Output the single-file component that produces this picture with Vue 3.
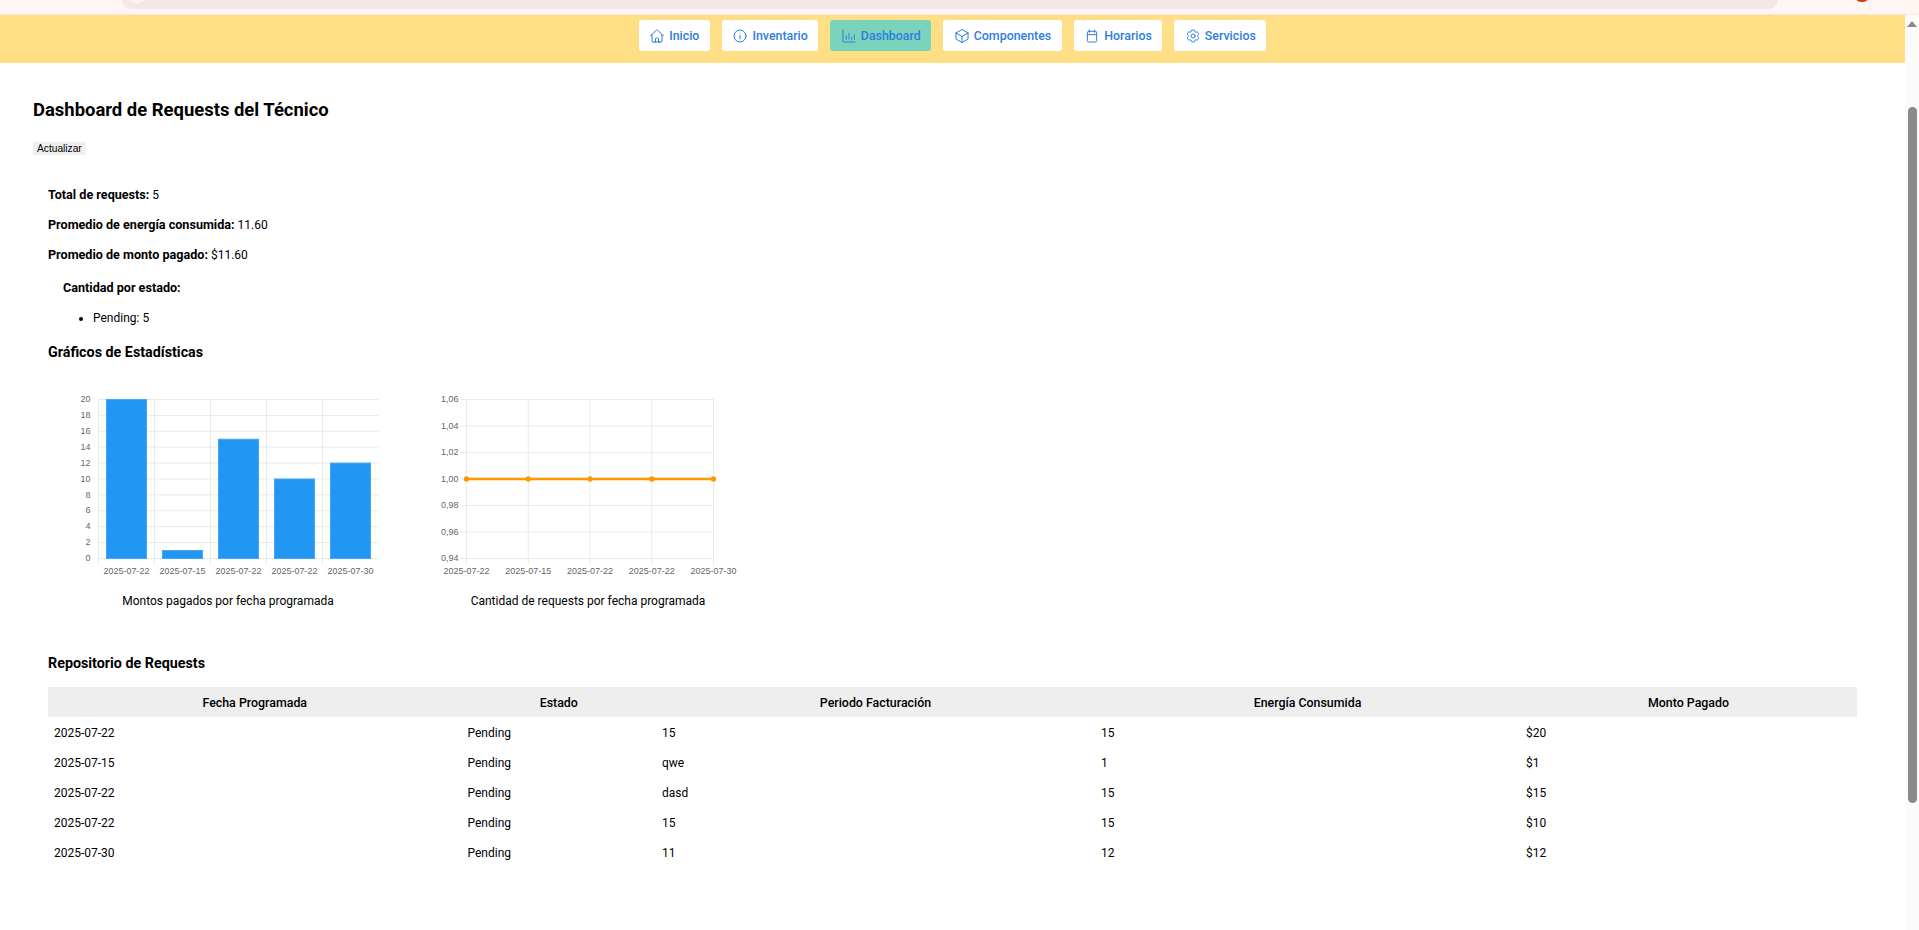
<template>
  <div class="window">
    <div class="browser-strip">
      <div class="address-pill"><span class="pill-circle"></span></div>
      <span class="browser-badge"></span>
    </div>

    <div class="viewport">
      <div class="page">
        <nav class="navbar">
          <a
            v-for="item in navItems"
            :key="item.label"
            href="#"
            class="nav-btn"
            :class="{ active: item.active }"
          >
            <svg class="nav-icon" viewBox="0 0 24 24" fill="none" stroke="currentColor" stroke-width="1.5" stroke-linecap="round" stroke-linejoin="round">
              <path :d="item.icon" />
            </svg>
            {{ item.label }}
          </a>
        </nav>

        <main class="dashboard">
          <h1>Dashboard de Requests del Técnico</h1>
          <button class="refresh-btn">Actualizar</button>

          <section class="stats">
            <p><strong>Total de requests:</strong> 5</p>
            <p><strong>Promedio de energía consumida:</strong> 11.60</p>
            <p><strong>Promedio de monto pagado:</strong> $11.60</p>
            <div class="states">
              <h4>Cantidad por estado:</h4>
              <ul>
                <li>Pending: 5</li>
              </ul>
            </div>

            <h3 class="charts-title">Gráficos de Estadísticas</h3>
            <div class="charts">
              <figure class="chart">
                <svg width="340" height="190" viewBox="0 0 340 190">
                  <g class="grid">
                    <line v-for="t in barTicks" :key="t" :x1="barLeft" :x2="barLeft + barBand * 5" :y1="barY(t)" :y2="barY(t)" />
                    <line v-for="i in 5" :key="i" :x1="barLeft + barBand * (i - 1)" :x2="barLeft + barBand * (i - 1)" :y1="plotTop" :y2="plotBottom + 6" />
                  </g>
                  <rect
                    v-for="(m, i) in montos"
                    :key="i"
                    class="bar"
                    :x="barLeft + barBand * i + 8"
                    :y="barY(m)"
                    width="40"
                    :height="plotBottom - barY(m)"
                  />
                  <text v-for="t in barTicks" :key="'y' + t" class="tick" :x="barLeft - 8" :y="barY(t) + 2.6" text-anchor="end">{{ t }}</text>
                  <text v-for="(f, i) in fechas" :key="'x' + i" class="tick" :x="barLeft + barBand * (i + 0.5)" y="184" text-anchor="middle">{{ f }}</text>
                </svg>
                <figcaption>Montos pagados por fecha programada</figcaption>
              </figure>

              <figure class="chart">
                <svg width="340" height="190" viewBox="0 0 340 190">
                  <g class="grid">
                    <line v-for="(t, i) in lineTicks" :key="t" :x1="lineLeft - 6" :x2="lineLeft + lineStep * 4" :y1="lineY(i)" :y2="lineY(i)" />
                    <line v-for="i in 5" :key="i" :x1="lineLeft + lineStep * (i - 1)" :x2="lineLeft + lineStep * (i - 1)" :y1="plotTop" :y2="plotBottom + 6" />
                  </g>
                  <line class="series" :x1="lineLeft" :x2="lineLeft + lineStep * 4" :y1="lineY(3)" :y2="lineY(3)" />
                  <circle v-for="i in 5" :key="i" class="dot" :cx="lineLeft + lineStep * (i - 1)" :cy="lineY(3)" r="2.7" />
                  <text v-for="(t, i) in lineTicks" :key="'y' + t" class="tick" :x="lineLeft - 8" :y="lineY(i) + 2.6" text-anchor="end">{{ t }}</text>
                  <text v-for="(f, i) in fechas" :key="'x' + i" class="tick" :x="lineLeft + lineStep * i" y="184" text-anchor="middle">{{ f }}</text>
                </svg>
                <figcaption>Cantidad de requests por fecha programada</figcaption>
              </figure>
            </div>

            <h3 class="repo-title">Repositorio de Requests</h3>
            <table class="requests">
              <colgroup>
                <col style="width: 413.5px" />
                <col style="width: 194.5px" />
                <col style="width: 439px" />
                <col style="width: 425px" />
                <col />
              </colgroup>
              <thead>
                <tr>
                  <th>Fecha Programada</th>
                  <th>Estado</th>
                  <th>Periodo Facturación</th>
                  <th>Energía Consumida</th>
                  <th>Monto Pagado</th>
                </tr>
              </thead>
              <tbody>
                <tr v-for="(r, i) in requests" :key="i">
                  <td>{{ r.fecha }}</td>
                  <td>Pending</td>
                  <td>{{ r.periodo }}</td>
                  <td>{{ r.energia }}</td>
                  <td>${{ r.monto }}</td>
                </tr>
              </tbody>
            </table>
          </section>
        </main>
      </div>

      <div class="scrollbar">
        <span class="scroll-arrow"></span>
        <span class="scroll-thumb"></span>
      </div>
    </div>
  </div>
</template>

<script setup>
const navItems = [
  {
    label: "Inicio",
    icon: "m2.25 12 8.954-8.955c.44-.439 1.152-.439 1.591 0L21.75 12M4.5 9.75v10.125c0 .621.504 1.125 1.125 1.125H9.75v-4.875c0-.621.504-1.125 1.125-1.125h2.25c.621 0 1.125.504 1.125 1.125V21h4.125c.621 0 1.125-.504 1.125-1.125V9.75M8.25 21h8.25",
  },
  {
    label: "Inventario",
    icon: "M21 12a9 9 0 1 1-18 0 9 9 0 0 1 18 0ZM12 11v5.5M12 7.75h.01",
  },
  {
    label: "Dashboard",
    active: true,
    icon: "M3 3v18h18M8 17v-5M12 17V8M16 17v-3M20 17v-7",
  },
  {
    label: "Componentes",
    icon: "m21 7.5-9-5.25L3 7.5m18 0-9 5.25m9-5.25v9l-9 5.25M3 7.5l9 5.25M3 7.5v9l9 5.25m0-9v9",
  },
  {
    label: "Horarios",
    icon: "M7 5h10a2 2 0 0 1 2 2v12a2 2 0 0 1-2 2H7a2 2 0 0 1-2-2V7a2 2 0 0 1 2-2ZM8 3v3.5M16 3v3.5M5 10h14",
  },
  {
    label: "Servicios",
    icon: "M9.594 3.94c.09-.542.56-.94 1.11-.94h2.593c.55 0 1.02.398 1.11.94l.213 1.281c.063.374.313.686.645.87.074.04.147.083.22.127.325.196.72.257 1.075.124l1.217-.456a1.125 1.125 0 0 1 1.37.49l1.296 2.247a1.125 1.125 0 0 1-.26 1.431l-1.003.827c-.293.241-.438.613-.43.992a7.723 7.723 0 0 1 0 .255c-.008.378.137.75.43.991l1.004.827c.424.35.534.955.26 1.43l-1.298 2.247a1.125 1.125 0 0 1-1.369.491l-1.217-.456c-.355-.133-.75-.072-1.076.124a6.47 6.47 0 0 1-.22.128c-.331.183-.581.495-.644.869l-.213 1.281c-.09.543-.56.94-1.11.94h-2.594c-.55 0-1.019-.398-1.11-.94l-.213-1.281c-.062-.374-.312-.686-.644-.87a6.52 6.52 0 0 1-.22-.127c-.325-.196-.72-.257-1.076-.124l-1.217.456a1.125 1.125 0 0 1-1.369-.49l-1.297-2.247a1.125 1.125 0 0 1 .26-1.431l1.004-.827c.292-.24.437-.613.43-.991a6.932 6.932 0 0 1 0-.255c.007-.38-.138-.751-.43-.992l-1.004-.827a1.125 1.125 0 0 1-.26-1.43l1.297-2.247a1.125 1.125 0 0 1 1.37-.491l1.216.456c.356.133.751.072 1.076-.124.072-.044.146-.086.22-.128.332-.183.582-.495.644-.869l.214-1.28ZM15 12a3 3 0 1 1-6 0 3 3 0 0 1 6 0Z",
  },
];

const requests = [
  { fecha: "2025-07-22", periodo: "15", energia: 15, monto: 20 },
  { fecha: "2025-07-15", periodo: "qwe", energia: 1, monto: 1 },
  { fecha: "2025-07-22", periodo: "dasd", energia: 15, monto: 15 },
  { fecha: "2025-07-22", periodo: "15", energia: 15, monto: 10 },
  { fecha: "2025-07-30", periodo: "11", energia: 12, monto: 12 },
];

const fechas = requests.map((r) => r.fecha);
const montos = requests.map((r) => r.monto);

const plotTop = 9.5;
const plotBottom = 168.5;

const barLeft = 40.5;
const barBand = 56;
const barTicks = [0, 2, 4, 6, 8, 10, 12, 14, 16, 18, 20];
const barY = (v) => plotBottom - ((plotBottom - plotTop) * v) / 20;

const lineLeft = 48.5;
const lineStep = 61.75;
const lineTicks = ["1,06", "1,04", "1,02", "1,00", "0,98", "0,96", "0,94"];
const lineY = (i) => plotTop + ((plotBottom - plotTop) * i) / 6;
</script>

<style>
html,
body {
  margin: 0;
  overflow: hidden;
}
</style>

<style scoped>
.window {
  height: 930px;
  display: flex;
  flex-direction: column;
  background: #fff;
  color: #000;
  font-family: Roboto, "Open Sans", sans-serif;
  font-size: 12px;
}

.browser-strip {
  height: 15px;
  flex-shrink: 0;
  padding: 0 141px 0 122px;
  box-sizing: border-box;
  background: #fff6f3;
  border-bottom: 1px solid #f8e6de;
  position: relative;
}

.address-pill {
  height: 9px;
  background: #f3e8e5;
  border-radius: 0 0 14px 14px;
  position: relative;
  overflow: hidden;
}

.pill-circle {
  position: absolute;
  left: 6px;
  top: -14px;
  width: 18px;
  height: 18px;
  border-radius: 50%;
  background: #fbf3f0;
}

.browser-badge {
  position: absolute;
  left: 1856px;
  top: -5px;
  width: 12px;
  height: 7px;
  border-radius: 50%;
  background: #cc3a12;
}

.viewport {
  flex: 1;
  display: flex;
  min-height: 0;
}

.page {
  flex: 1;
  min-width: 0;
}

.navbar {
  height: 48px;
  box-sizing: border-box;
  padding-top: 5px;
  background: #ffdf85;
  display: flex;
  justify-content: center;
  align-items: flex-start;
  gap: 12px;
}

.nav-btn {
  height: 31px;
  box-sizing: border-box;
  display: flex;
  align-items: center;
  gap: 4px;
  padding: 0 10.5px;
  background: #fff;
  border-radius: 3px;
  color: #2f7de1;
  font-size: 12.4px;
  font-weight: 500;
  text-decoration: none;
}

.nav-btn.active {
  background: #7ad4bc;
}

.nav-icon {
  width: 16px;
  height: 16px;
  flex-shrink: 0;
}

.dashboard {
  padding: 35px 48px 0 33px;
}

h1 {
  margin: 0;
  font-size: 18.45px;
  line-height: 24px;
  font-weight: 700;
}

.refresh-btn {
  display: block;
  height: 13px;
  margin-top: 20px;
  padding: 0 4px;
  border: none;
  background: #efefef;
  color: #000;
  font-family: "Liberation Sans", Arial, sans-serif;
  font-size: 10.2px;
  line-height: 13px;
}

.stats {
  margin-top: 32px;
  padding-left: 15px;
}

.stats p {
  margin: 0 0 14px;
  line-height: 16px;
}

.stats strong {
  font-size: 12.6px;
}

.states {
  margin: 17px 0 0 15px;
}

h4 {
  margin: 0;
  font-size: 12.6px;
  line-height: 16px;
  font-weight: 700;
}

ul {
  margin: 14px 0 0;
  padding-left: 30px;
  line-height: 16px;
}

h3 {
  margin: 0;
  font-size: 14.3px;
  line-height: 16px;
  font-weight: 700;
}

.charts-title {
  margin-top: 18px;
}

.charts {
  display: flex;
  gap: 20px;
  margin: 30px 0 0 10px;
}

.chart {
  margin: 0;
  width: 340px;
}

.chart svg {
  display: block;
}

.chart figcaption {
  margin-top: 13px;
  line-height: 16px;
  text-align: center;
}

.grid line {
  stroke: #e9e9e9;
  stroke-width: 1;
}

.bar {
  fill: #2196f3;
  stroke: #42a5f5;
  stroke-width: 1;
}

.series {
  stroke: #ff9800;
  stroke-width: 2.4;
}

.dot {
  fill: #ff9800;
}

.tick {
  fill: #666;
  font-family: "Liberation Sans", Arial, sans-serif;
  font-size: 9px;
}

.repo-title {
  margin-top: 46px;
}

.requests {
  margin-top: 16px;
  width: 100%;
  table-layout: fixed;
  border-collapse: collapse;
}

.requests th {
  height: 30px;
  padding: 0 6px;
  background: #eee;
  font-size: 12.4px;
  font-weight: 500;
  text-align: center;
}

.requests td {
  height: 30px;
  box-sizing: border-box;
  padding: 1px 6px 0;
  text-align: left;
}

.scrollbar {
  width: 14px;
  flex-shrink: 0;
  background: #fbfbfb;
  display: flex;
  flex-direction: column;
  align-items: center;
}

.scroll-arrow {
  margin-top: 6px;
  width: 0;
  height: 0;
  border-left: 5px solid transparent;
  border-right: 5px solid transparent;
  border-bottom: 6px solid #8a8a8a;
}

.scroll-thumb {
  margin-top: 80px;
  width: 9px;
  height: 696px;
  border-radius: 5px;
  background: #8a8a8a;
}
</style>
